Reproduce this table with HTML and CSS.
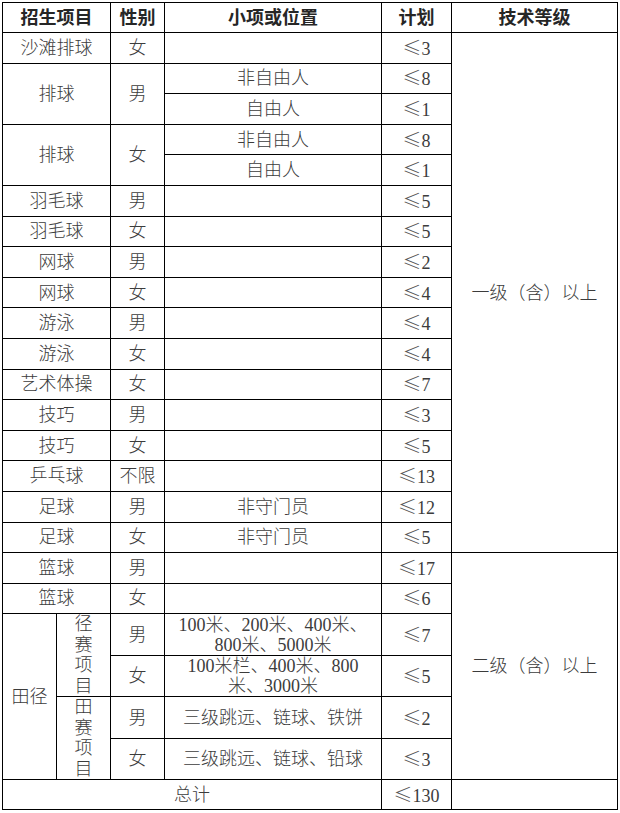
FILE: index.html
```html
<!DOCTYPE html>
<html lang="zh-CN">
<head>
<meta charset="utf-8">
<title>招生项目</title>
<link rel="stylesheet" href="styles.css">
</head>
<body>
<table class="plan">
  <colgroup>
    <col class="c-a"><col class="c-b"><col class="c-sex"><col class="c-item"><col class="c-num"><col class="c-level">
  </colgroup>
  <thead>
    <tr class="r-head">
      <th colspan="2">招生项目</th><th>性别</th><th>小项或位置</th><th>计划</th><th>技术等级</th>
    </tr>
  </thead>
  <tbody>
    <tr class="r"><td colspan="2">沙滩排球</td><td>女</td><td></td><td class="num"><span class="le">≤</span>3</td><td rowspan="17">一级（含）以上</td></tr>
    <tr class="r"><td colspan="2" rowspan="2">排球</td><td rowspan="2">男</td><td>非自由人</td><td class="num"><span class="le">≤</span>8</td></tr>
    <tr class="r"><td>自由人</td><td class="num"><span class="le">≤</span>1</td></tr>
    <tr class="r"><td colspan="2" rowspan="2">排球</td><td rowspan="2">女</td><td>非自由人</td><td class="num"><span class="le">≤</span>8</td></tr>
    <tr class="r"><td>自由人</td><td class="num"><span class="le">≤</span>1</td></tr>
    <tr class="r"><td colspan="2">羽毛球</td><td>男</td><td></td><td class="num"><span class="le">≤</span>5</td></tr>
    <tr class="r"><td colspan="2">羽毛球</td><td>女</td><td></td><td class="num"><span class="le">≤</span>5</td></tr>
    <tr class="r"><td colspan="2">网球</td><td>男</td><td></td><td class="num"><span class="le">≤</span>2</td></tr>
    <tr class="r"><td colspan="2">网球</td><td>女</td><td></td><td class="num"><span class="le">≤</span>4</td></tr>
    <tr class="r"><td colspan="2">游泳</td><td>男</td><td></td><td class="num"><span class="le">≤</span>4</td></tr>
    <tr class="r"><td colspan="2">游泳</td><td>女</td><td></td><td class="num"><span class="le">≤</span>4</td></tr>
    <tr class="r"><td colspan="2">艺术体操</td><td>女</td><td></td><td class="num"><span class="le">≤</span>7</td></tr>
    <tr class="r"><td colspan="2">技巧</td><td>男</td><td></td><td class="num"><span class="le">≤</span>3</td></tr>
    <tr class="r"><td colspan="2">技巧</td><td>女</td><td></td><td class="num"><span class="le">≤</span>5</td></tr>
    <tr class="r"><td colspan="2">乒乓球</td><td>不限</td><td></td><td class="num"><span class="le">≤</span>13</td></tr>
    <tr class="r"><td colspan="2">足球</td><td>男</td><td>非守门员</td><td class="num"><span class="le">≤</span>12</td></tr>
    <tr class="r"><td colspan="2">足球</td><td>女</td><td>非守门员</td><td class="num"><span class="le">≤</span>5</td></tr>
    <tr class="r"><td colspan="2">篮球</td><td>男</td><td></td><td class="num"><span class="le">≤</span>17</td><td rowspan="6">二级（含）以上</td></tr>
    <tr class="r"><td colspan="2">篮球</td><td>女</td><td></td><td class="num"><span class="le">≤</span>6</td></tr>
    <tr class="r-tall"><td rowspan="4">田径</td><td rowspan="2" class="vert">径赛项目</td><td>男</td><td class="multi">100米、200米、400米、<br>800米、5000米</td><td class="num"><span class="le">≤</span>7</td></tr>
    <tr class="r-tall"><td>女</td><td class="multi">100米栏、400米、800<br>米、3000米</td><td class="num"><span class="le">≤</span>5</td></tr>
    <tr class="r-tall"><td rowspan="2" class="vert">田赛项目</td><td>男</td><td>三级跳远、链球、铁饼</td><td class="num"><span class="le">≤</span>2</td></tr>
    <tr class="r-tall"><td>女</td><td>三级跳远、链球、铅球</td><td class="num"><span class="le">≤</span>3</td></tr>
    <tr class="r-total"><td colspan="4">总计</td><td class="num"><span class="le">≤</span>130</td><td></td></tr>
  </tbody>
</table>
</body>
</html>
```

FILE: styles.css
```css
html, body {
  margin: 0;
  padding: 0;
  background: #fff;
}

body {
  padding: 2px 0 0 2px;
}

.plan {
  border-collapse: collapse;
  table-layout: fixed;
  width: 615px;
  font-family: "Liberation Serif", "Noto Sans CJK SC", serif;
  font-size: 18px;
  color: #3c3c3c;
}

.c-a { width: 54px; }
.c-b { width: 54px; }
.c-sex { width: 54px; }
.c-item { width: 217px; }
.c-num { width: 70px; }
.c-level { width: 166px; }

.plan th,
.plan td {
  border: 1px solid #000;
  padding: 0;
  text-align: center;
  vertical-align: middle;
  line-height: 20px;
  font-weight: 300;
}

.plan th {
  font-weight: 700;
  color: #262626;
}

.r-head { height: 30px; }
.r { height: 30.6px; }
.r-tall { height: 40.5px; }
.r-total { height: 30px; }

.plan td.vert {
  padding: 0 17px;
  line-height: 20.5px;
}

.plan td.multi {
  line-height: 20px;
}

.le {
  font-family: "Noto Sans CJK SC", "DejaVu Sans", sans-serif;
  font-weight: 300;
  font-size: 19px;
  color: #555;
}
```
